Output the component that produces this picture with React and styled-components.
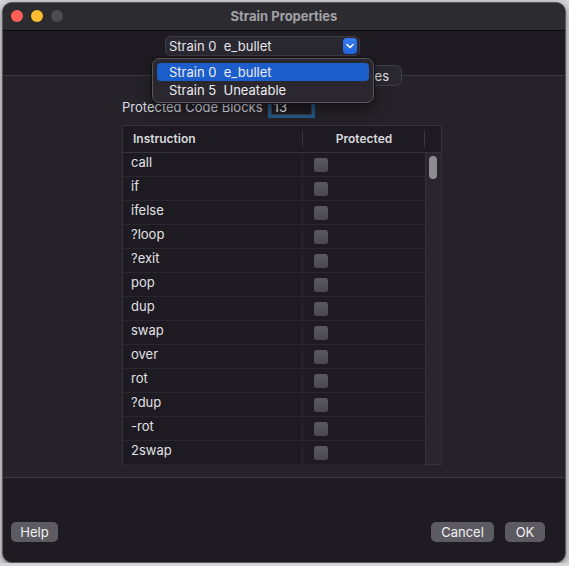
import React from "react"
import styled, { createGlobalStyle } from "styled-components"

const Global = createGlobalStyle`
  html, body {
    margin: 0;
    padding: 0;
    background: #d5d5d7;
    font-family: Inter, "Noto Sans", "Liberation Sans", sans-serif;
    -webkit-font-smoothing: antialiased;
  }
  * { box-sizing: border-box; }
`

const Window = styled.div`
  position: relative;
  margin: 2px 0 0 2px;
  width: 564px;
  height: 561px;
  border: 1px solid #58575c;
  border-radius: 10px;
  overflow: hidden;
  display: flex;
  flex-direction: column;
  background: #1e1c22;
  box-shadow: 0 2px 6px rgba(0, 0, 0, 0.45);
`

const TitleBar = styled.div`
  height: 28px;
  flex: none;
  display: grid;
  grid-template-columns: 1fr auto 1fr;
  align-items: center;
  padding: 0 8px 1px;
  background: #2c2b30;
  border-bottom: 1px solid #0c0b0e;
`

const Lights = styled.div`
  display: flex;
  gap: 8px;
`

const Light = styled.span`
  width: 12px;
  height: 12px;
  border-radius: 50%;
  background: ${p => p.$color};
`

const Title = styled.div`
  font-size: 13px;
  font-weight: 700;
  color: #a2a1a6;
`

const TopArea = styled.div`
  flex: none;
  padding-top: 5px;
  display: flex;
  flex-direction: column;
  gap: 9px;
`

const PopupRow = styled.div`
  padding-left: 162px;
`

const Popup = styled.div`
  width: 195px;
  height: 20px;
  display: flex;
  align-items: center;
  justify-content: space-between;
  padding: 0 2px 0 3px;
  background: #2a2830;
  border: 1px solid #3e3c43;
  border-radius: 5px;
  font-size: 13px;
  color: #e6e5ea;
  white-space: pre;
`

const Chevron = styled.span`
  width: 14px;
  height: 16px;
  border-radius: 4px;
  background: linear-gradient(#3479ee, #2466dc);
  display: flex;
  align-items: center;
  justify-content: center;
`

const TabRow = styled.div`
  position: relative;
  z-index: 1;
  display: flex;
  justify-content: flex-end;
  padding-right: 163px;
`

const Segmented = styled.div`
  display: flex;
  height: 21px;
  background: #2a2830;
  border: 1px solid #3f3d44;
  border-radius: 6px;
  overflow: hidden;
`

const Segment = styled.div`
  width: ${p => p.$w}px;
  padding-right: 12px;
  display: flex;
  align-items: center;
  justify-content: flex-end;
  font-size: 13px;
  color: #e2e1e6;
  border-left: ${p => (p.$first ? "none" : "1px solid #3f3d44")};
`

const Panel = styled.div`
  flex: none;
  height: 403px;
  margin-top: -11px;
  background: #252329;
  border-top: 1px solid #3b3940;
  border-bottom: 1px solid #3b3940;
  padding: 21px 0 0 119px;
  display: flex;
  flex-direction: column;
  gap: 8px;
`

const FieldRow = styled.div`
  height: 20px;
  display: flex;
  align-items: center;
  gap: 8px;
  font-size: 13px;
  color: #dddce1;
`

const Field = styled.div`
  width: 41px;
  height: 16px;
  padding-left: 2px;
  background: #1e1c22;
  border: 1px solid #3e3c43;
  box-shadow: 0 0 0 3px #235a88;
  font-size: 13px;
  line-height: 14px;
  color: #f0f0f0;
`

const Table = styled.div`
  width: 320px;
  height: 340px;
  display: flex;
  flex-direction: column;
  background: #1d1b21;
  border: 1px solid #34323a;
`

const HeaderRow = styled.div`
  height: 27px;
  flex: none;
  display: grid;
  grid-template-columns: 180px 122px 1fr;
  padding-bottom: 2px;
  border-bottom: 1px solid #35333a;
  font-size: 12px;
  font-weight: 600;
  color: #dad9de;
`

const HeaderCell = styled.div`
  position: relative;
  display: flex;
  align-items: center;
  justify-content: ${p => (p.$center ? "center" : "flex-start")};
  padding-left: ${p => (p.$center ? "0" : "10px")};
  &::after {
    content: "";
    position: absolute;
    right: 0;
    top: 5px;
    bottom: 3px;
    width: 1px;
    background: ${p => (p.$last ? "transparent" : "#3a3840")};
  }
`

const Body = styled.div`
  flex: 1;
  display: flex;
  min-height: 0;
`

const Rows = styled.div`
  width: 302px;
  display: flex;
  flex-direction: column;
`

const Row = styled.div`
  height: 24px;
  flex: none;
  display: grid;
  grid-template-columns: 180px 122px;
  border-bottom: 1px solid #29272e;
`

const NameCell = styled.div`
  padding: 1px 0 0 8px;
  font-size: 13px;
  line-height: 16px;
  color: #e2e1e6;
  border-right: 1px solid #29272e;
`

const BoxCell = styled.div`
  display: flex;
  align-items: center;
  padding-left: 11px;
`

const Check = styled.span`
  width: 14px;
  height: 14px;
  border-radius: 3px;
  background: linear-gradient(#5a595f, #4a494f);
`

const Scrollbar = styled.div`
  flex: 1;
  background: #28262c;
  border-left: 1px solid #35333a;
  padding: 3px 0 0 3px;
`

const Thumb = styled.div`
  width: 8px;
  height: 23px;
  border-radius: 4px;
  background: #8d8c91;
`

const BottomArea = styled.div`
  flex: 1;
  display: flex;
  align-items: flex-end;
  padding: 0 20px 20px 8px;
  gap: 11px;
`

const Button = styled.div`
  height: 20px;
  width: ${p => p.$w}px;
  margin-right: ${p => (p.$push ? "auto" : "0")};
  display: flex;
  align-items: center;
  justify-content: center;
  background: #5c5b61;
  border-radius: 5px;
  font-size: 13px;
  color: #f1f0f4;
`

const Menu = styled.div`
  position: absolute;
  left: 149px;
  top: 55px;
  width: 222px;
  height: 45px;
  padding: 4px;
  background: #2a282e;
  border: 1px solid #58565c;
  border-radius: 7px;
  box-shadow: 0 0 0 1px #111, 0 6px 14px rgba(0, 0, 0, 0.5);
  z-index: 5;
`

const MenuItem = styled.div`
  height: 18px;
  display: flex;
  align-items: center;
  padding-left: 12px;
  border-radius: 4px;
  font-size: 13px;
  white-space: pre;
  color: #ececf0;
  background: ${p => (p.$active ? "#1c5dcc" : "transparent")};
`

const instructions = [
  "call", "if", "ifelse", "?loop", "?exit", "pop", "dup",
  "swap", "over", "rot", "?dup", "-rot", "2swap",
]

export default function App() {
  return (
    <>
      <Global />
      <Window>
        <TitleBar>
          <Lights>
            <Light $color="#fe5f57" />
            <Light $color="#febc2e" />
            <Light $color="#4d4c51" />
          </Lights>
          <Title>Strain Properties</Title>
          <div />
        </TitleBar>

        <TopArea>
          <PopupRow>
            <Popup>
              <span>Strain 0  e_bullet</span>
              <Chevron>
                <svg width="8" height="6" viewBox="0 0 8 6">
                  <path d="M1 1.5 L4 4.5 L7 1.5" fill="none" stroke="#fff" strokeWidth="1.6" strokeLinecap="round" strokeLinejoin="round" />
                </svg>
              </Chevron>
            </Popup>
          </PopupRow>
          <TabRow>
            <Segmented>
              <Segment $first $w={110} />
              <Segment $w={126}>es</Segment>
            </Segmented>
          </TabRow>
        </TopArea>

        <Panel>
          <FieldRow>
            Protected Code Blocks
            <Field>13</Field>
          </FieldRow>
          <Table>
            <HeaderRow>
              <HeaderCell>Instruction</HeaderCell>
              <HeaderCell $center>Protected</HeaderCell>
              <HeaderCell $last />
            </HeaderRow>
            <Body>
              <Rows>
                {instructions.map(name => (
                  <Row key={name}>
                    <NameCell>{name}</NameCell>
                    <BoxCell><Check /></BoxCell>
                  </Row>
                ))}
              </Rows>
              <Scrollbar>
                <Thumb />
              </Scrollbar>
            </Body>
          </Table>
        </Panel>

        <BottomArea>
          <Button $w={47} $push>Help</Button>
          <Button $w={63}>Cancel</Button>
          <Button $w={40}>OK</Button>
        </BottomArea>

        <Menu>
          <MenuItem $active>Strain 0  e_bullet</MenuItem>
          <MenuItem>Strain 5  Uneatable</MenuItem>
        </Menu>
      </Window>
    </>
  )
}
